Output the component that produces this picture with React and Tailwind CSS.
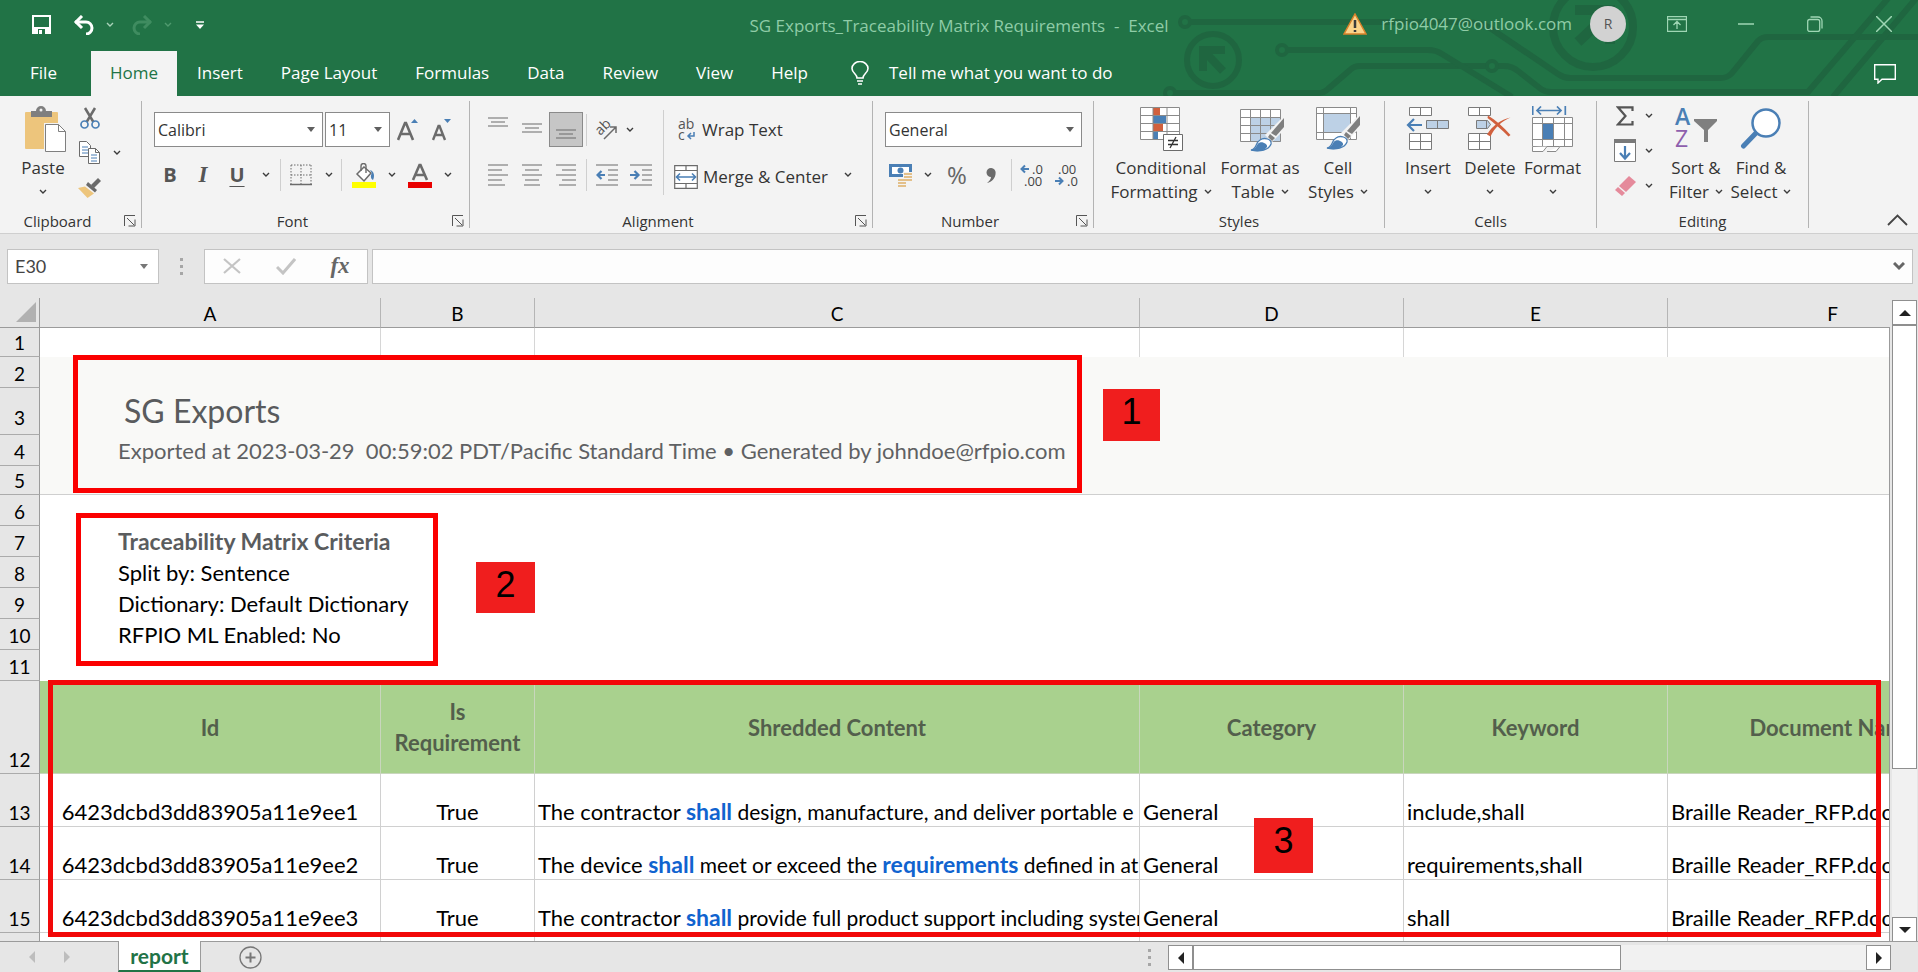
import clsx from "clsx";

const GRAY = "#6b6b6b";
const BLUE = "#4a7fb5";

const Svg = ({ w, h, children, className }) => (
	<svg width={w} height={h} viewBox={`0 0 ${w} ${h}`} fill="none" className={clsx("shrink-0", className)} aria-hidden="true">
		{children}
	</svg>
);

const Chevron = ({ color = "#3b3b3b" }) => (
	<Svg w={8} h={6}>
		<path d="M1 1l3 3 3-3" stroke={color} strokeWidth="1.4" />
	</Svg>
);

const ChevronButton = ({ label, className }) => (
	<button aria-label={label} className={clsx("flex h-full items-center justify-center", className)}>
		<Chevron />
	</button>
);

const IconButton = ({ label, className, children }) => (
	<button aria-label={label} className={clsx("flex h-full items-center justify-center", className)}>
		{children}
	</button>
);

const Divider = ({ className }) => <div className={clsx("w-px bg-[#cfcfcf]", className)} />;

const Circuit = () => (
	<svg width="768" height="96" viewBox="1150 0 768 96" fill="none" stroke="#1f6640" strokeWidth="6" className="absolute right-0 top-0" aria-hidden="true">
		<circle cx="1185" cy="22" r="5" strokeWidth="4" />
		<path d="M1190 22H1464Q1484 22 1496 32L1558 74Q1564 78 1570 78H1720Q1728 78 1732 73L1758 41Q1762 37 1768 37H1918" />
		<circle cx="1213" cy="60" r="26" />
		<path d="M1225 50H1203V71M1204 51L1223 71" strokeWidth="8" />
		<circle cx="1170" cy="93" r="5" strokeWidth="4" />
		<path d="M1175 93H1318Q1324 93 1328 89L1350 70Q1354 66 1360 66H1487M1498 66H1504Q1512 66 1518 71L1541 89Q1545 92 1551 92H1808L1890 -4M1833 97L1918 -4" />
		<circle cx="1492" cy="66" r="5" strokeWidth="4" />
		<circle cx="1282" cy="50" r="5" strokeWidth="4" />
		<path d="M1287 50H1428Q1436 50 1442 54L1512 97" />
		<circle cx="1593" cy="27" r="40" strokeWidth="8" />
		<path d="M1575 10H1610V44M1608 14L1578 42" strokeWidth="10" />
	</svg>
);

const TitleBar = () => (
	<div className="relative grid h-[51px] grid-cols-[1fr_auto_1fr] items-center">
		<div className="flex items-center pl-8 pb-[2px]">
			<button aria-label="Save">
				<Svg w={19} h={19}>
					<path d="M1 1h17v17H1z" stroke="#fff" strokeWidth="2" />
					<path d="M1 12h17v6H1z" fill="#fff" />
					<path d="M6 14h7v5H6z" fill="#217346" />
					<path d="M7 15h3v4H7z" fill="#fff" />
				</Svg>
			</button>
			<button aria-label="Undo" className="ml-[22px]">
				<Svg w={22} h={20}>
					<path d="M2 7h11a6 6 0 0 1 0 12" stroke="#fff" strokeWidth="3" />
					<path d="M9 1L3 7l6 6" stroke="#fff" strokeWidth="3" />
				</Svg>
			</button>
			<button aria-label="Undo options" className="ml-[11px]"><Chevron color="#a9d3b9" /></button>
			<button aria-label="Redo" className="ml-[17px]">
				<Svg w={22} h={20}>
					<path d="M20 7H9a6 6 0 0 0 0 12" stroke="#3f8c60" strokeWidth="3" />
					<path d="M13 1l6 6-6 6" stroke="#3f8c60" strokeWidth="3" />
				</Svg>
			</button>
			<button aria-label="Redo options" className="ml-[11px]"><Chevron color="#4f9a6e" /></button>
			<button aria-label="Customize Quick Access Toolbar" className="ml-6">
				<Svg w={8} h={8}>
					<path d="M0 1h8" stroke="#fff" strokeWidth="1.5" />
					<path d="M0 3.5h8L4 8z" fill="#fff" />
				</Svg>
			</button>
		</div>
		<h1 className="text-[17px] whitespace-pre text-[#8fcca7]">SG Exports_Traceability Matrix Requirements{"  -  "}Excel</h1>
		<div className="flex items-center justify-end pb-1 text-[#8fcca7]">
			<Svg w={24} h={22}>
				<path d="M12 1L23 21H1z" fill="#fbd38a" stroke="#d9822b" strokeWidth="1.5" />
				<path d="M12 7v8M12 17v2" stroke="#3b3b3b" strokeWidth="2.5" />
			</Svg>
			<span className="ml-[14px] text-[17px]">rfpio4047@outlook.com</span>
			<span className="ml-[18px] mr-4 flex size-9 items-center justify-center rounded-full bg-[#d2d2d2] text-[14px] text-[#555]">R</span>
			<button aria-label="Ribbon Display Options" className="flex w-[69px] justify-center">
				<Svg w={20} h={16}>
					<path d="M.5.5h19v15H.5zM.5 3.5h19M10 13V6M6.500 9L10 5.500 13.500 9" stroke="#9fd6b4" strokeWidth="1.300" />
				</Svg>
			</button>
			<button aria-label="Minimize" className="flex w-[69px] justify-center">
				<Svg w={16} h={16}><path d="M0 8h16" stroke="#9fd6b4" strokeWidth="1.5" /></Svg>
			</button>
			<button aria-label="Restore" className="flex w-[69px] justify-center">
				<Svg w={16} h={16}>
					<rect x=".7" y="3.500" width="12" height="12" rx="2" stroke="#9fd6b4" strokeWidth="1.300" />
					<path d="M3.500 1H11a4 4 0 0 1 4 4v7.500" stroke="#9fd6b4" strokeWidth="1.300" />
				</Svg>
			</button>
			<button aria-label="Close" className="flex w-[69px] justify-center">
				<Svg w={16} h={16}><path d="M0 0l16 16M16 0L0 16" stroke="#9fd6b4" strokeWidth="1.500" /></Svg>
			</button>
		</div>
	</div>
);

const tabs = ["Insert", "Page Layout", "Formulas", "Data", "Review", "View", "Help"];

const RibbonTabs = () => (
	<nav className="relative flex h-[45px] items-stretch text-[17px] text-white">
		<button className="w-[91px] pr-1 pb-[2px]">File</button>
		<button className="mr-px w-[86px] bg-[#f3f3f3] pb-[2px] text-[#217346]">Home</button>
		{tabs.map((tab) => (
			<button key={tab} className="px-[19px] pb-[2px]">{tab}</button>
		))}
		<button className="ml-6 flex items-center gap-5 pb-[2px]">
			<Svg w={18} h={24}>
				<path d="M6 17c0-4-5-5-5-9.500a8 7 0 0 1 16 0C17 12 12 13 12 17z" stroke="#fff" strokeWidth="1.600" />
				<path d="M6 20h6M7 23h4" stroke="#fff" strokeWidth="1.600" />
			</Svg>
			Tell me what you want to do
		</button>
		<button aria-label="Comments" className="ml-auto mr-[22px]">
			<Svg w={22} h={20}>
				<path d="M.7.7h20.600v14.600H8L4 19v-3.700H.7z" stroke="#fff" strokeWidth="1.400" />
			</Svg>
		</button>
	</nav>
);

const Group = ({ label, launcher, width, children }) => (
	<>
		<section aria-label={label} className={clsx("flex shrink-0 flex-col", width)}>
			<div className="flex flex-1">{children}</div>
			<div className="flex h-6 items-center">
				<span className="flex-1 text-center text-[15px] leading-6">{label}</span>
				{launcher && (
					<button aria-label={`${label} settings`} className="flex w-[26px] items-center justify-end pr-[5px]">
						<Svg w={12} h={12}>
							<path d="M.5 11V.5H11M3 3l7 7M11 4.500v6.500H4.500" stroke="#555" />
						</Svg>
					</button>
				)}
			</div>
		</section>
		<div className="my-[5px] w-px bg-[#b3b3b3]" />
	</>
);

const BigButton = ({ icon, lines, className }) => (
	<button className={clsx("flex flex-col items-center pt-[10px] text-[17px] leading-6", className)}>
		<span className="mb-1 flex h-[46px] items-center">{icon}</span>
		<span>{lines[0]}</span>
		<span className="flex h-6 items-center gap-[6px]">
			{lines[1]}
			<Chevron />
		</span>
	</button>
);

// drawn over the lower right corner of a sheet icon
const Brush = () => (
	<>
		<path d="M45 6v14L32 33l-7-7z" fill="#f3f3f3" />
		<path d="M44 9v9l-8 9-5-3z" fill="#7f7f7f" />
		<path d="M30 25l5 4-3 3-4-4z" fill="#7f7f7f" />
		<path d="M11 41c6-1 4-7 9-10 4-3 12-1 11 4-2 6-11 8-20 6z" fill="#fff" stroke={BLUE} strokeWidth="1.300" />
		<path d="M11 41.500c6-1 5-7 9-8 3-1 8 2 7 4.500-3 4.500-10 5-16 3.500z" fill={BLUE} />
	</>
);

const PasteIcon = () => (
	<Svg w={46} h={46}>
		<g transform="translate(5 0)">
			<rect x="0" y="6" width="33" height="37" rx="1" fill="#edc57c" />
			<path d="M6 5h5a5 5 0 0 1 10 0h6v6H6z" fill="#7f7f7f" />
			<circle cx="16" cy="4" r="1.500" fill="#f3f3f3" />
			<path d="M19 17h16l8 8v22H19z" fill="#f3f3f3" />
			<path d="M20.500 18.500h13l7 7v20h-20z" fill="#fff" stroke="#7f7f7f" />
			<path d="M33.500 18.500v7h7" stroke="#7f7f7f" />
		</g>
	</Svg>
);

const ClipboardGroup = () => (
	<Group label="Clipboard" launcher width="w-[141px]">
		<BigButton className="ml-3 w-[62px]" icon={<PasteIcon />} lines={["Paste"]} />
		<div className="grid grid-cols-[31px_24px] auto-rows-[35px] pt-1">
			<IconButton label="Cut">
				<Svg w={20} h={22}>
					<path d="M5 1l9 15M15 1L6 16" stroke={GRAY} strokeWidth="2.500" />
					<circle cx="4.500" cy="17.500" r="3.500" fill="#f3f3f3" stroke={BLUE} strokeWidth="1.700" />
					<circle cx="15.500" cy="17.500" r="3.500" fill="#f3f3f3" stroke={BLUE} strokeWidth="1.700" />
				</Svg>
			</IconButton>
			<span />
			<IconButton label="Copy">
				<Svg w={21} h={23}>
					<path d="M.5.5h7l4 4v11H.5z" fill="#fff" stroke={GRAY} />
					<path d="M3 6h6M3 9h6M3 12h6" stroke={BLUE} />
					<path d="M9.500 7.500h7l4 4v11h-11z" fill="#fff" stroke={GRAY} />
					<path d="M16.500 7.500v4h4" stroke={GRAY} />
					<path d="M12 14h6M12 17h6M12 20h6" stroke={BLUE} />
				</Svg>
			</IconButton>
			<ChevronButton label="Copy options" />
			<IconButton label="Format Painter">
				<Svg w={23} h={20}>
					<path d="M20 0l3 3-7 7-3-3z" fill={GRAY} />
					<path d="M10 4l9 8-2 2.500L8 7z" fill={GRAY} />
					<path d="M7 8.500l9 7L9.500 20 0 10z" fill="#edc57c" />
				</Svg>
			</IconButton>
		</div>
	</Group>
);

const Dropdown = ({ label, value, className }) => (
	<label className={clsx("relative block", className)}>
		<select aria-label={label} className="h-[35px] w-full appearance-none border border-[#8a8a8a] bg-white pl-[3px] text-[16px]">
			<option>{value}</option>
		</select>
		<span className="pointer-events-none absolute right-2 top-[15px]">
			<Svg w={8} h={5}><path d="M0 0h8L4 5z" fill="#5f5f5f" /></Svg>
		</span>
	</label>
);

const FontGroup = () => (
	<Group label="Font" launcher width="w-[327px]">
		<div className="flex flex-col gap-3 pl-3 pt-4">
			<div className="flex">
				<Dropdown label="Font" value="Calibri" className="w-[169px]" />
				<Dropdown label="Font size" value="11" className="ml-[2px] w-[65px]" />
				<IconButton label="Increase font size" className="w-9">
					<Svg w={22} h={24}>
						<path d="M1 22L8 5h1l7 17M4 16h9" stroke={GRAY} strokeWidth="2.600" />
						<path d="M14 5h7l-3.500-4z" fill={BLUE} />
					</Svg>
				</IconButton>
				<IconButton label="Decrease font size" className="w-8">
					<Svg w={20} h={24}>
						<path d="M1 22L6.500 8h1L13 22M3 17h8" stroke={GRAY} strokeWidth="2.400" />
						<path d="M12 1h7l-3.500 4z" fill={BLUE} />
					</Svg>
				</IconButton>
			</div>
			<div className="flex h-8 items-center text-[20px] leading-8 text-[#555]">
				<button className="w-8 font-bold">B</button>
				<button className="w-[34px] font-['Liberation_Serif',serif] text-[23px] font-bold italic">I</button>
				<button className="w-[34px] font-bold underline decoration-1 underline-offset-4">U</button>
				<ChevronButton label="Underline options" className="w-6" />
				<Divider className="mx-[2px] h-8" />
				<IconButton label="Borders" className="w-9">
					<Svg w={22} h={22}>
						<path d="M1 1h20M1 11h20M1 1v19M11 1v19M21 1v19" stroke={GRAY} strokeDasharray="1.500 1.500" />
						<path d="M0 20.500h22" stroke={GRAY} strokeWidth="1.500" />
					</Svg>
				</IconButton>
				<ChevronButton label="Border options" className="w-5" />
				<Divider className="mx-[2px] h-8" />
				<IconButton label="Fill Color" className="w-10">
					<Svg w={24} h={25}>
						<path d="M5 11l7-7 7 6-7 8z" fill="#fff" stroke={GRAY} strokeWidth="1.500" />
						<path d="M9 8V3a2.500 2.500 0 0 1 5 0v7" stroke={GRAY} strokeWidth="1.400" />
						<path d="M18 7c4 1 5 6 3 10-2-1-3-4-1-7z" fill={BLUE} />
						<path d="M0 19h24v6H0z" fill="#ff0" />
					</Svg>
				</IconButton>
				<ChevronButton label="Fill options" className="w-4" />
				<IconButton label="Font Color" className="w-10">
					<Svg w={24} h={25}>
						<path d="M5 17L11.500 2h1L19 17M8 12h8" stroke={GRAY} strokeWidth="2.600" />
						<path d="M0 19h24v6H0z" fill="#e80000" />
					</Svg>
				</IconButton>
				<ChevronButton label="Font color options" className="w-4" />
			</div>
		</div>
	</Group>
);

// five-line paragraph icons for the horizontal alignments
const ParagraphIcon = ({ d }) => (
	<Svg w={20} h={22}><path d={d} stroke={GRAY} strokeWidth="1.200" /></Svg>
);

const WrapIcon = () => (
	<svg width="18" height="24" viewBox="0 0 18 24" className="overflow-visible" aria-hidden="true">
		<text x="0" y="11" fontSize="14" fill="#555">ab</text>
		<text x="0" y="22" fontSize="14" fill="#555">c</text>
		<path d="M16 14v4h-5M13 15l-3 3 3 3" fill="none" stroke={BLUE} strokeWidth="1.500" />
	</svg>
);

const MergeIcon = () => (
	<Svg w={24} h={24}>
		<path d="M.7.7h22.600v22.600H.7zM.7 5.500h22.600M.7 18.500h22.600M12 1v4.500M12 18.500V23" fill="#fff" stroke={GRAY} strokeWidth="1.200" />
		<path d="M3 12h18M6 8.500L2.500 12 6 15.500M18 8.500l3.500 3.500-3.500 3.500" stroke={BLUE} strokeWidth="1.600" />
	</Svg>
);

const AlignmentGroup = () => (
	<Group label="Alignment" launcher width="w-[402px]">
		<div className="flex flex-col gap-3 pl-[11px] pt-4">
			<div className="flex h-[35px] items-center">
				<IconButton label="Top Align" className="w-[34px] pb-4">
					<Svg w={20} h={10}><path d="M0 1h20M3 5h14M0 9h20" stroke={GRAY} strokeWidth="1.200" /></Svg>
				</IconButton>
				<IconButton label="Middle Align" className="w-[34px] pb-1">
					<Svg w={20} h={10}><path d="M0 1h20M3 5h14M0 9h20" stroke={GRAY} strokeWidth="1.200" /></Svg>
				</IconButton>
				<IconButton label="Bottom Align" className="w-[34px] border border-[#8a8a8a] bg-[#c6c6c6] pt-2">
					<Svg w={20} h={10}><path d="M0 1h20M3 5h14M0 9h20" stroke={GRAY} strokeWidth="1.200" /></Svg>
				</IconButton>
				<Divider className="mx-[3px] h-8" />
				<IconButton label="Orientation" className="w-[34px]">
					<svg width="22" height="22" viewBox="0 0 22 22" className="overflow-visible" aria-hidden="true">
						<text x="1" y="15" fontSize="14" fill="#555" transform="rotate(-45 5 12)">ab</text>
						<path d="M8 20L20 8M14 8h6v6" fill="none" stroke={GRAY} strokeWidth="1.500" />
					</svg>
				</IconButton>
				<ChevronButton label="Orientation options" className="w-3" />
			</div>
			<div className="flex h-8 items-center">
				<IconButton label="Align Left" className="w-[34px]">
					<ParagraphIcon d="M0 1h20M0 6h14M0 11h20M0 16h14M0 21h17" />
				</IconButton>
				<IconButton label="Center" className="w-[34px]">
					<ParagraphIcon d="M0 1h20M3 6h14M0 11h20M3 16h14M2 21h16" />
				</IconButton>
				<IconButton label="Align Right" className="w-[34px]">
					<ParagraphIcon d="M0 1h20M6 6h14M0 11h20M6 16h14M3 21h17" />
				</IconButton>
				<Divider className="mx-[3px] h-8" />
				<IconButton label="Decrease Indent" className="w-[34px]">
					<Svg w={22} h={22}>
						<path d="M0 1h22M12 6h10M12 11h10M12 16h10M0 21h22" stroke={GRAY} strokeWidth="1.200" />
						<path d="M9 11H2M5.500 7L1.500 11l4 4" stroke={BLUE} strokeWidth="2.200" />
					</Svg>
				</IconButton>
				<IconButton label="Increase Indent" className="w-[34px]">
					<Svg w={22} h={22}>
						<path d="M0 1h22M12 6h10M12 11h10M12 16h10M0 21h22" stroke={GRAY} strokeWidth="1.200" />
						<path d="M0 11h7M4.500 7l4 4-4 4" stroke={BLUE} strokeWidth="2.200" />
					</Svg>
				</IconButton>
			</div>
		</div>
		<Divider className="ml-[5px] mr-[10px] mt-[14px] h-[85px]" />
		<div className="flex flex-col gap-3 pt-4 text-[17px]">
			<button className="flex h-[35px] items-center gap-[6px] pl-1"><WrapIcon />Wrap Text</button>
			<div className="flex h-8">
				<button className="flex items-center gap-[5px] pt-1"><MergeIcon />Merge &amp; Center</button>
				<ChevronButton label="Merge options" className="ml-[10px] w-5" />
			</div>
		</div>
	</Group>
);

const DecimalIcon = ({ top, bottom, arrow, x1, x2 }) => (
	<svg width="24" height="24" viewBox="0 0 24 24" className="overflow-visible" aria-hidden="true">
		<text x={x1} y="11" fontSize="13" fill="#444">{top}</text>
		<text x={x2} y="23" fontSize="13" fill="#444">{bottom}</text>
		<path d={arrow} fill="none" stroke={BLUE} strokeWidth="2" />
	</svg>
);

const NumberGroup = () => (
	<Group label="Number" launcher width="w-[220px]">
		<div className="flex flex-col gap-3 pl-3 pt-4">
			<Dropdown label="Number format" value="General" className="w-[197px]" />
			<div className="flex h-8 items-center text-[#666]">
				<IconButton label="Accounting Number Format" className="w-8">
					<Svg w={24} h={24}>
						<path d="M0 1h23v13H0z" fill={BLUE} />
						<path d="M3 4h17v7H3z" fill="#fff" />
						<circle cx="11.500" cy="7.500" r="3" fill={BLUE} />
						<path d="M14 9h9v9h-5v5H8v-7h6z" fill="#f3f3f3" />
						<path d="M15 11h8M15 14h8M15 17h8M9 17h7M9 20h8M9 23h8" stroke="#e3c08a" strokeWidth="2" />
					</Svg>
				</IconButton>
				<ChevronButton label="Accounting options" className="w-[22px]" />
				<button className="w-9 text-[24px] leading-8">%</button>
				<IconButton label="Comma Style" className="w-8">
					<Svg w={10} h={15}><path d="M5 0a4.500 4.500 0 0 1 4.600 5C9.600 10 6 14 1 15c2.500-2 4-4 4-6A4.500 4.500 0 0 1 5 0z" fill={GRAY} /></Svg>
				</IconButton>
				<Divider className="mx-1 h-8" />
				<IconButton label="Increase Decimal" className="w-8">
					<DecimalIcon top=".0" bottom=".00" x1={12} x2={4} arrow="M9 6H2M5 2.500L1.500 6 5 9.500" />
				</IconButton>
				<IconButton label="Decrease Decimal" className="w-9">
					<DecimalIcon top=".00" bottom=".0" x1={4} x2={13} arrow="M1 18h7M5 14.500L8.500 18 5 21.500" />
				</IconButton>
			</div>
		</div>
	</Group>
);

const ConditionalIcon = () => (
	<Svg w={44} h={44}>
		<g transform="translate(1 0)">
			<path d="M.5.5h39v32H.5z" fill="#fff" />
			<path d="M13 0h7v8h-7zM13 16h10v8H13z" fill="#d1603d" />
			<path d="M13 8h13v8H13zM13 24h5v8h-5z" fill={BLUE} />
			<path d="M.5.5h39v32H.5zM13 0v32M27 0v32M0 8.500h39M0 16.500h39M0 24.500h39" stroke="#8a8a8a" />
			<path d="M23.500 27.500h19v16h-19z" fill="#fff" stroke="#6b6b6b" />
			<path d="M28 33.500h10M28 37.500h10M36 30l-6 11" stroke="#333" strokeWidth="1.300" />
		</g>
	</Svg>
);

const TableIcon = () => (
	<Svg w={50} h={46}>
		<g transform="translate(5 3)">
			<path d="M.5.5h40v32H.5z" fill="#fff" />
			<path d="M11 9h30v24H11z" fill="#bdd1e6" />
			<path d="M.5.5h40v32H.5zM10.500 0v33M20.500 0v33M30.500 0v33M0 8.500h40M0 16.500h40M0 24.500h40" stroke="#8a8a8a" />
			<Brush />
		</g>
	</Svg>
);

const CellStyleIcon = () => (
	<Svg w={45} h={44}>
		<path d="M.5.5h40v32H.5z" fill="#fff" />
		<path d="M7 7h27v18H7z" fill="#bdd1e6" />
		<path d="M.5.5h40v32H.5zM7.500 0v33M34.500 0v33M0 6.500h40M0 25.500h40" stroke="#8a8a8a" />
		<Brush />
	</Svg>
);

const StylesGroup = () => (
	<Group label="Styles" width="w-[290px]">
		<BigButton className="ml-[13px] w-[108px]" icon={<ConditionalIcon />} lines={["Conditional", "Formatting"]} />
		<BigButton className="w-[90px]" icon={<TableIcon />} lines={["Format as", "Table"]} />
		<BigButton className="w-[66px]" icon={<CellStyleIcon />} lines={["Cell", "Styles"]} />
	</Group>
);

const InsertIcon = () => (
	<Svg w={44} h={44}>
		<path d="M3.500.5h22v8h-22zM14.500 0v9M3.500 26.500h22v16h-22zM14.500 26v17M3 34.500h22" fill="#fff" stroke="#7a7a7a" />
		<path d="M20.500 13.500h22v8h-22zM31.500 13v9" fill="#bdd1e6" stroke="#7a7a7a" />
		<path d="M16 18H2M8 12l-6 6 6 6" stroke={BLUE} strokeWidth="2.200" />
	</Svg>
);

const DeleteIcon = () => (
	<Svg w={44} h={44}>
		<path d="M.5.5h22v8H.5zM11.500 0v9M.5 26.500h22v16H.5zM11.500 26v17M0 34.500h22" fill="#fff" stroke="#7a7a7a" />
		<path d="M8.500 13.500h11l3 4-3 4h-11zM18.500 13v9" fill="#bdd1e6" stroke="#7a7a7a" />
		<path d="M20 8.500c8 5 16 12 22.500 19.500l-2 1.500C34 23 26 16 19.500 11z" fill="#d1603d" />
		<path d="M42.500 10.500C34 14 26 21 22.500 29.500l-3.500-2C24 19 33 12.500 42.500 10.500z" fill="#d1603d" />
	</Svg>
);

const FormatIcon = () => (
	<Svg w={42} h={46}>
		<path d="M.7 0v9M33.300 0v9M5 4.500h24M9 .5l-4 4 4 4M25 .5l4 4-4 4" stroke={BLUE} strokeWidth="1.700" />
		<path d="M.5 11.500h40v29H.5z" fill="#fff" />
		<path d="M10 18h12v15H10z" fill={BLUE} />
		<path d="M.5 11.500h40v29H.5zM10.500 11v29M21.500 11v29M32.500 11v29M0 17.500h41M0 33.500h41" stroke="#8a8a8a" />
		<path d="M.5 41v4.500H11l4-5M15 45.500h9l4-5" fill="#fff" stroke="#8a8a8a" />
	</Svg>
);

const CellsGroup = () => (
	<Group label="Cells" width="w-[211px]">
		<BigButton className="ml-3 w-[62px]" icon={<InsertIcon />} lines={["Insert"]} />
		<BigButton className="w-[62px]" icon={<DeleteIcon />} lines={["Delete"]} />
		<BigButton className="w-[63px]" icon={<FormatIcon />} lines={["Format"]} />
	</Group>
);

const SortIcon = () => (
	<svg width="42" height="42" viewBox="0 0 42 42" className="overflow-visible" aria-hidden="true">
		<text x="0" y="17" fontSize="23" fontWeight="600" fill={BLUE}>A</text>
		<text x="0" y="39" fontSize="23" fill="#8e5fad">Z</text>
		<path d="M19 11h23v2l-9 9v12h-4V22l-10-9z" fill="#7f7f7f" />
	</svg>
);

const FindIcon = () => (
	<Svg w={42} h={42}>
		<path d="M16 25L3.500 38" stroke={BLUE} strokeWidth="5" strokeLinecap="round" />
		<circle cx="26" cy="15" r="13.500" fill="#fff" stroke={BLUE} strokeWidth="2.500" />
	</Svg>
);

const EditingGroup = () => (
	<Group label="Editing" width="w-[211px]">
		<div className="ml-3 grid auto-rows-[35px] grid-cols-[32px_16px] pt-[2px]">
			<IconButton label="AutoSum">
				<Svg w={18} h={20}><path d="M16.500 5V1.300H2L9.500 10 2 18.500h14.500V15" stroke="#555" strokeWidth="2.200" /></Svg>
			</IconButton>
			<ChevronButton label="AutoSum options" />
			<IconButton label="Fill">
				<Svg w={22} h={23}>
					<path d="M.5.5h21v22H.5z" fill="#fff" stroke="#7a7a7a" />
					<path d="M0 0h22v4H0z" fill="#7a7a7a" />
					<path d="M11 7v12M6 14l5 5.500 5-5.500" stroke={BLUE} strokeWidth="2.200" />
				</Svg>
			</IconButton>
			<ChevronButton label="Fill options" />
			<IconButton label="Clear">
				<Svg w={21} h={20}>
					<path d="M14 0l7 6-10 10-7-6z" fill="#e58a9b" />
					<path d="M3 11l7 6-3 3-7-6z" fill="#e58a9b" />
				</Svg>
			</IconButton>
			<ChevronButton label="Clear options" />
		</div>
		<BigButton className="ml-[6px] w-[66px]" icon={<SortIcon />} lines={["Sort &", "Filter"]} />
		<BigButton className="w-16" icon={<FindIcon />} lines={["Find &", "Select"]} />
	</Group>
);

const Ribbon = () => (
	<div className="flex h-[138px] border-b border-[#cfcfcf] bg-[#f3f3f3]">
		<ClipboardGroup />
		<FontGroup />
		<AlignmentGroup />
		<NumberGroup />
		<StylesGroup />
		<CellsGroup />
		<EditingGroup />
		<button aria-label="Collapse the Ribbon" className="mb-[7px] ml-auto mr-[10px] self-end">
			<Svg w={21} h={12}><path d="M1 11L10.500 1.500 20 11" stroke="#444" strokeWidth="1.800" /></Svg>
		</button>
	</div>
);

const Dots = () => (
	<span className="flex flex-col gap-1">
		<i className="size-[3px] bg-[#a6a6a6]" />
		<i className="size-[3px] bg-[#a6a6a6]" />
		<i className="size-[3px] bg-[#a6a6a6]" />
	</span>
);

const FormulaBar = () => (
	<div className="flex h-16 items-center pl-[7px] pr-[5px]">
		<label className="flex h-[35px] w-[152px] items-center border border-[#c3c3c3] bg-white pr-[10px]">
			<input aria-label="Name Box" defaultValue="E30" className="min-w-0 flex-1 pl-[7px] font-['Lato',sans-serif] text-[18px] text-[#444] outline-none" />
			<Svg w={8} h={5}><path d="M0 0h8L4 5z" fill="#777" /></Svg>
		</label>
		<span className="flex w-[45px] justify-center"><Dots /></span>
		<div className="grid h-[35px] w-[164px] grid-cols-3 border border-[#c3c3c3] bg-[#fdfdfd]">
			<IconButton label="Cancel">
				<Svg w={18} h={16}><path d="M1 1l16 14M17 1L1 15" stroke="#c4c4c4" strokeWidth="2.200" /></Svg>
			</IconButton>
			<IconButton label="Enter">
				<Svg w={20} h={17}><path d="M1 9l6 6L19 1" stroke="#c4c4c4" strokeWidth="3" /></Svg>
			</IconButton>
			<button aria-label="Insert Function" className="font-['Liberation_Serif',serif] text-[23px] leading-8 font-bold italic text-[#666]">fx</button>
		</div>
		<label className="ml-1 flex h-[35px] flex-1 items-center border border-[#c3c3c3] bg-[#fdfdfd] pr-[7px]">
			<input aria-label="Formula Bar" className="min-w-0 flex-1 pl-2 outline-none" />
			<Svg w={12} h={9}><path d="M1 1l5 5 5-5" stroke="#666" strokeWidth="3" /></Svg>
		</label>
	</div>
);

const columns = ["A", "B", "C", "D", "E", "F"];
const headings = ["Id", "Is Requirement", "Shredded Content", "Category", "Keyword", "Document Name"];

const Hit = ({ children }) => <b className="text-[23px] text-[#1063cf]">{children}</b>;

const requirements = [
	{
		id: "6423dcbd3dd83905a11e9ee1",
		lead: "The contractor ",
		content: <><Hit>shall</Hit> design, manufacture, and deliver portable e</>,
		keyword: "include,shall",
	},
	{
		id: "6423dcbd3dd83905a11e9ee2",
		lead: "The device ",
		content: <><Hit>shall</Hit> meet or exceed the <Hit>requirements</Hit> defined in at</>,
		keyword: "requirements,shall",
	},
	{
		id: "6423dcbd3dd83905a11e9ee3",
		lead: "The contractor ",
		content: <><Hit>shall</Hit> provide full product support including system</>,
		keyword: "shall",
	},
];

const RowNumber = ({ n, className }) => (
	<th scope="row" className={clsx("border-b border-r border-b-[#ababab] border-r-[#9b9b9b] bg-[#e6e6e6] p-0 text-center align-bottom text-[19px] leading-[26px] font-normal", className)}>
		{n}
	</th>
);

const WideRow = ({ n, height, band, last, numberClass, children }) => (
	<tr className={height}>
		<RowNumber n={n} className={numberClass} />
		<td colSpan={6} className={clsx("p-0 pb-[2px] pl-[78px] align-bottom", band && "bg-[#f9f9f7]", last && "border-b border-[#cfcfcf]")}>
			{children}
		</td>
	</tr>
);

const Cell = ({ className, children }) => (
	<td className={clsx("overflow-hidden border-b border-r border-[#d0d0d0] px-[3px] pt-0 pb-px align-bottom", className)}>{children}</td>
);

const SheetTable = () => (
	<table className="w-[1998px] table-fixed border-separate border-spacing-0 bg-white text-[22px] leading-[26px] whitespace-nowrap text-black">
		<colgroup>
			<col className="w-10" />
			<col className="w-[341px]" />
			<col className="w-[154px]" />
			<col className="w-[605px]" />
			<col className="w-[264px]" />
			<col className="w-[264px]" />
			<col className="w-[330px]" />
		</colgroup>
		<thead>
			<tr className="h-[30px] bg-[#e6e6e6]">
				<td className="border-b border-r border-[#9b9b9b] p-0">
					<Svg w={21} h={21} className="ml-4"><path d="M20 0v20H0z" fill="#b1b1b1" /></Svg>
				</td>
				{columns.map((c) => (
					<th key={c} scope="col" className="border-b border-r border-b-[#9b9b9b] border-r-[#b5b5b5] p-0 pt-[2px] text-[19px] font-normal">{c}</th>
				))}
			</tr>
		</thead>
		<tbody>
			<tr className="h-[29px]">
				<RowNumber n={1} />
				{columns.map((c) => <td key={c} className="border-r border-[#d6d6d6]" />)}
			</tr>
			<WideRow n={2} height="h-[31px]" band />
			<WideRow n={3} height="h-[47px]" numberClass="pb-[3px]" band>
				<div className="pb-1 pl-[6px] text-[32px] leading-9 text-[#595b5d]">SG Exports</div>
			</WideRow>
			<WideRow n={4} height="h-[31px]" band>
				<span className="whitespace-pre text-[#5f6163]">{"Exported at 2023-03-29  00:59:02 PDT/Pacific Standard Time • Generated by johndoe@rfpio.com"}</span>
			</WideRow>
			<WideRow n={5} height="h-[29px]" band last />
			<WideRow n={6} height="h-[31px]" />
			<WideRow n={7} height="h-[31px]"><b className="text-[23px] text-[#5a5c5e]">Traceability Matrix Criteria</b></WideRow>
			<WideRow n={8} height="h-[31px]">Split by: Sentence</WideRow>
			<WideRow n={9} height="h-[31px]">Dictionary: Default Dictionary</WideRow>
			<WideRow n={10} height="h-[31px]">RFPIO ML Enabled: No</WideRow>
			<WideRow n={11} height="h-[31px]" />
			<tr className="h-[93px]">
				<RowNumber n={12} />
				{headings.map((h) => (
					<th key={h} scope="col" className="border-b border-r border-[#c9d6bd] bg-[#a9d18e] px-2 py-0 leading-[31px] font-bold whitespace-normal text-[#535f4c]">{h}</th>
				))}
			</tr>
			{requirements.map((r, i) => (
				<tr key={r.id} className="h-[53px]">
					<RowNumber n={13 + i} />
					<Cell className="text-center">{r.id}</Cell>
					<Cell className="text-center">True</Cell>
					<Cell>{r.lead}<span className="text-[21px]">{r.content}</span></Cell>
					<Cell>General</Cell>
					<Cell>{r.keyword}</Cell>
					<Cell>Braille Reader_RFP.docx</Cell>
				</tr>
			))}
			<tr className="h-[53px]">
				<RowNumber n={16} />
				{columns.map((c) => <Cell key={c} />)}
			</tr>
		</tbody>
	</table>
);

const Callout = ({ n, className }) => (
	<div className={clsx("absolute flex justify-center bg-[#f01e1e] font-['Liberation_Sans',sans-serif] text-[36px] leading-[46px] text-black", className)}>{n}</div>
);

const Triangle = ({ d, color = "#222" }) => (
	<Svg w={12} h={12}><path d={d} fill={color} /></Svg>
);
const UP = "M0 9h12L6 3z";
const DOWN = "M0 3h12L6 9z";
const LEFT = "M9 0v12L3 6z";
const RIGHT = "M3 0v12l6-6z";

const scrollPart = "flex items-center justify-center border border-[#8f8f8f] bg-white";

const Sheet = () => (
	<div className="flex min-h-0 flex-1 font-['Lato',sans-serif]">
		<div className="relative min-w-0 flex-1 overflow-hidden">
			<SheetTable />
			<div className="absolute left-[73px] top-[57px] h-[138px] w-[1009px] border-5 border-[#fb0000]" />
			<div className="absolute left-[76px] top-[215px] h-[153px] w-[362px] border-5 border-[#fb0000]" />
			<div className="absolute left-[48px] right-2 top-[382px] h-[257px] border-5 border-[#f20808]" />
			<Callout n={1} className="left-[1103px] top-[91px] h-[52px] w-[57px]" />
			<Callout n={2} className="left-[476px] top-[264px] h-[51px] w-[59px]" />
			<Callout n={3} className="left-[1254px] top-[520px] h-[55px] w-[59px]" />
		</div>
		<div className="mr-[2px] mt-[29px] w-px bg-[#9b9b9b]" />
		<div className="-mb-px mr-px mt-[2px] flex w-[25px] flex-col bg-[#f1f1f1]">
			<button aria-label="Scroll up" className={clsx(scrollPart, "h-[25px]")}><Triangle d={UP} /></button>
			<div className={clsx(scrollPart, "h-[444px]")} />
			<button aria-label="Scroll down" className={clsx(scrollPart, "mt-auto h-[25px]")}><Triangle d={DOWN} /></button>
		</div>
	</div>
);

const SheetTabs = () => (
	<div className="flex h-[31px] border-t border-[#9b9b9b]">
		<div className="flex w-[118px] items-center gap-[23px] pl-[26px]">
			<button aria-label="Previous sheet"><Triangle d={LEFT} color="#bdbdbd" /></button>
			<button aria-label="Next sheet"><Triangle d={RIGHT} color="#bdbdbd" /></button>
		</div>
		<button className="-mt-px w-[83px] border-x border-b-2 border-x-[#9b9b9b] border-b-[#217346] bg-white font-['Lato',sans-serif] text-[21px] leading-7 font-bold text-[#217346]">report</button>
		<button aria-label="New sheet" className="ml-[38px]">
			<Svg w={23} h={23}>
				<circle cx="11.500" cy="11.500" r="10.500" stroke="#777" strokeWidth="1.300" />
				<path d="M11.500 6.500v10M6.500 11.500h10" stroke="#777" strokeWidth="2" />
			</Svg>
		</button>
		<span className="ml-auto flex w-[37px] items-center justify-center"><Dots /></span>
		<div className="mr-[27px] mt-[3px] flex h-[25px] w-[723px] bg-[#f1f1f1]">
			<button aria-label="Scroll left" className={clsx(scrollPart, "w-[25px]")}><Triangle d={LEFT} /></button>
			<div className={clsx(scrollPart, "w-[428px]")} />
			<button aria-label="Scroll right" className={clsx(scrollPart, "ml-auto w-[25px]")}><Triangle d={RIGHT} /></button>
		</div>
	</div>
);

export default function App() {
	return (
		<div className="flex h-screen flex-col overflow-hidden bg-[#e6e6e6] font-['Open_Sans','Noto_Sans',sans-serif] text-[#333]">
			<header className="relative bg-[#217346]">
				<Circuit />
				<TitleBar />
				<RibbonTabs />
			</header>
			<Ribbon />
			<FormulaBar />
			<Sheet />
			<SheetTabs />
		</div>
	);
}
